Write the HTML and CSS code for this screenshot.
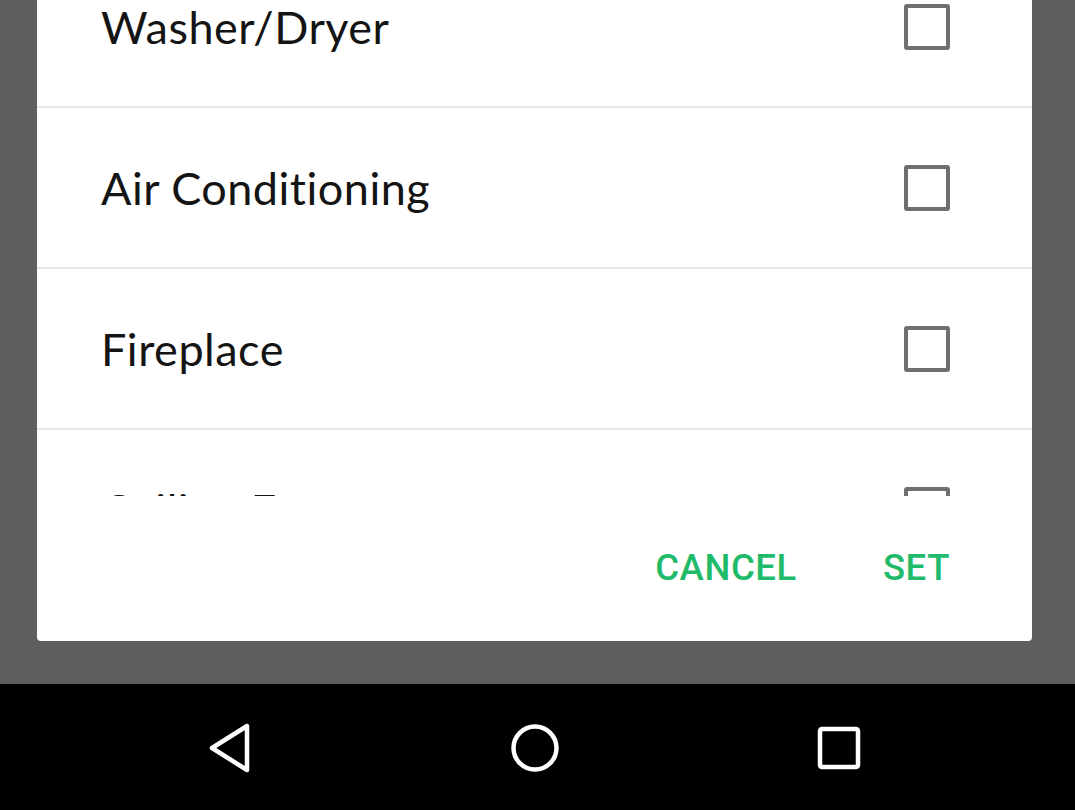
FILE: index.html
```html
<!DOCTYPE html>
<html>
<head>
<meta charset="utf-8">
<link rel="stylesheet" href="styles.css">
</head>
<body>
<div class="screen">
  <div class="scrim">
    <div class="dialog">
      <div class="list-viewport">
        <ul class="list">
          <li class="row"><span class="label">Washer/Dryer</span><span class="checkbox"></span></li>
          <li class="row"><span class="label">Air Conditioning</span><span class="checkbox"></span></li>
          <li class="row"><span class="label">Fireplace</span><span class="checkbox"></span></li>
          <li class="row"><span class="label">Ceiling Fan</span><span class="checkbox"></span></li>
        </ul>
      </div>
      <div class="actions">
        <button class="btn">CANCEL</button>
        <button class="btn">SET</button>
      </div>
    </div>
  </div>
  <nav class="navbar">
    <svg class="nav-icon back" width="48" height="52" viewBox="0 0 48 52"><path d="M41 4 L41 48 L6 26 Z" fill="none" stroke="#fff" stroke-width="4.5" stroke-linejoin="round"/></svg>
    <svg class="nav-icon home" width="52" height="52" viewBox="0 0 52 52"><circle cx="26" cy="26" r="21.5" fill="none" stroke="#fff" stroke-width="4.5"/></svg>
    <svg class="nav-icon recent" width="46" height="46" viewBox="0 0 46 46"><rect x="4" y="4" width="38" height="38" rx="2" fill="none" stroke="#fff" stroke-width="4.5"/></svg>
  </nav>
</div>
</body>
</html>
```

FILE: styles.css
```css
html, body {
  margin: 0;
  padding: 0;
}
body {
  width: 1075px;
  height: 810px;
  overflow: hidden;
  background: #5e5e5e;
  font-family: "Lato", "Noto Sans", sans-serif;
}
.screen {
  display: flex;
  flex-direction: column;
  height: 810px;
}
.scrim {
  height: 684px;
  background: #5e5e5e;
  padding-left: 37px;
  padding-right: 43px;
  box-sizing: border-box;
}
.dialog {
  background: #fff;
  height: 641px;
  border-radius: 0 0 4px 4px;
  display: flex;
  flex-direction: column;
}
.list-viewport {
  height: 496px;
  overflow: hidden;
}
.list {
  list-style: none;
  margin: -53px 0 0 0;
  padding: 0;
}
.row {
  height: 159px;
  border-bottom: 2px solid #e6e6e6;
  display: flex;
  align-items: center;
  justify-content: space-between;
  padding-left: 64px;
  padding-right: 82px;
}
.label {
  font-size: 45px;
  color: #141414;
  letter-spacing: 0.5px;
}
.checkbox {
  width: 38px;
  height: 38px;
  border: 4px solid #6f6f6f;
  border-radius: 3px;
}
.actions {
  flex: 1;
  display: flex;
  justify-content: flex-end;
  align-items: flex-start;
  padding-top: 50px;
  padding-right: 82px;
  gap: 86px;
}
.btn {
  border: 0;
  background: none;
  padding: 0;
  font-family: "Roboto", "Liberation Sans", sans-serif;
  font-weight: 500;
  font-size: 36.5px;
  letter-spacing: 0.6px;
  color: #1fbb6a;
  line-height: 44px;
}
.navbar {
  flex: 1;
  background: #000;
  display: flex;
  align-items: center;
  padding-top: 2px;
}
.nav-icon {
  display: block;
}
.back {
  margin-left: 206px;
}
.home {
  margin-left: 255px;
}
.recent {
  margin-left: 255px;
}
```
